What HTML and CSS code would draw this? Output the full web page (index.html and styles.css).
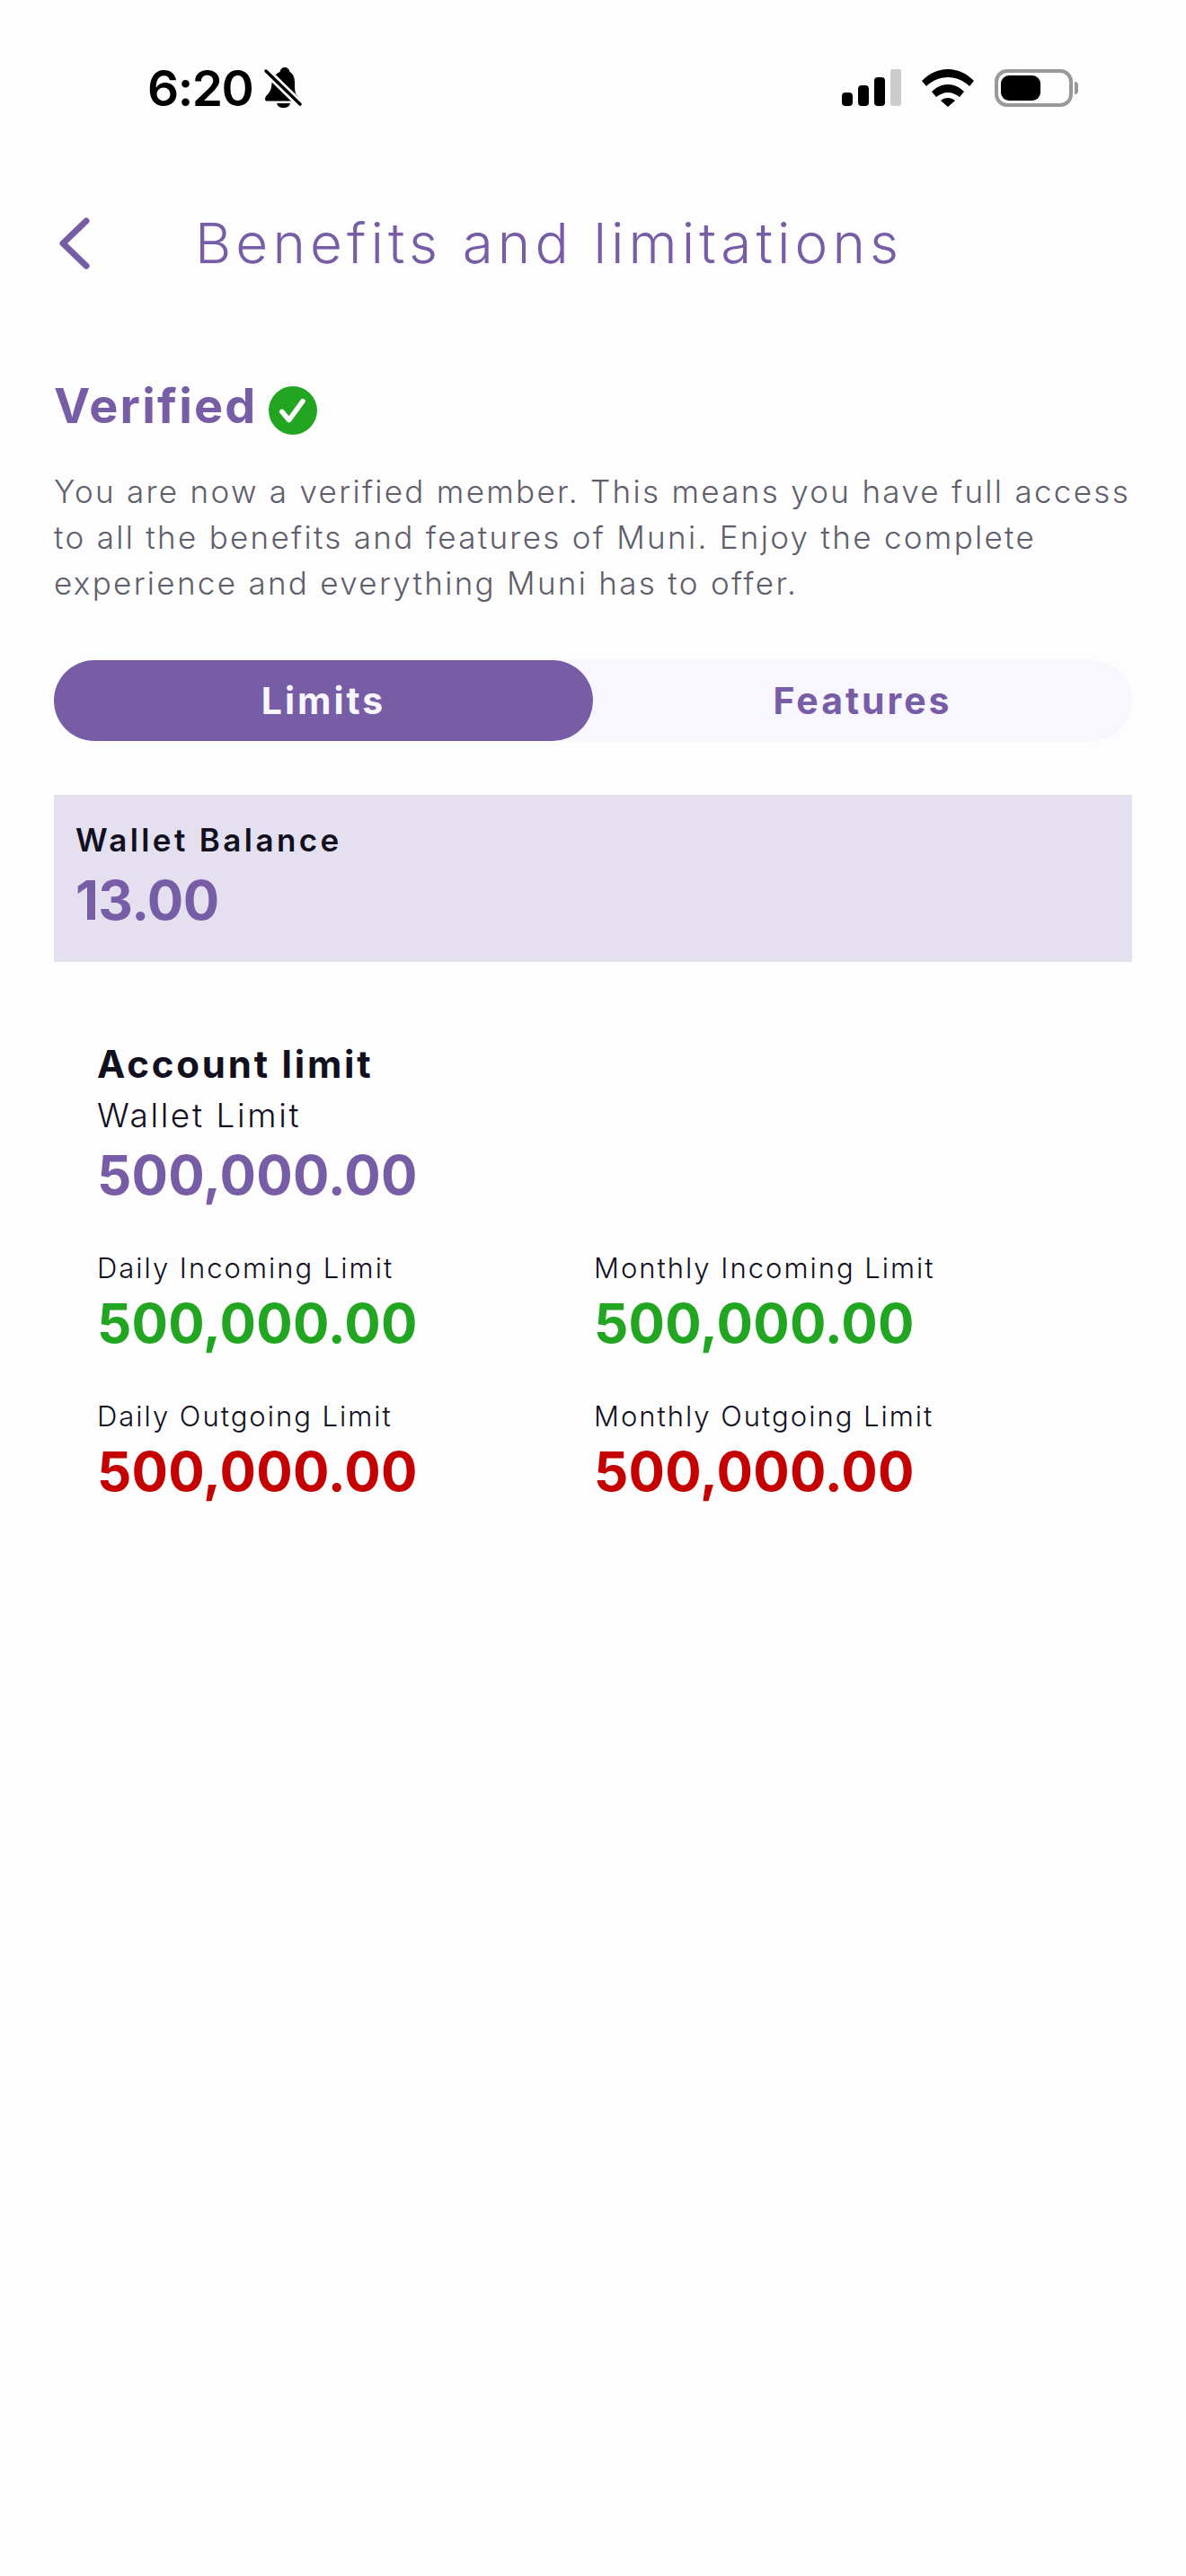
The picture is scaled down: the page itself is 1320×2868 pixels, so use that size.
FILE: index.html
```html
<!DOCTYPE html>
<html lang="en">
<head>
  <meta charset="UTF-8">
  <title>Benefits and limitations</title>
  <link rel="stylesheet" href="styles.css">
</head>
<body>
<div class="status">
  <div class="status-left">
    <span class="time">6:20</span>
    <svg class="bell" width="44" height="48" viewBox="0 0 44 48">
      <path d="M24 1C21 1 19 3 18.5 6 12 9 10 13 9.5 19 9 26 7 29 4 32 2.500 33.500 2 35 2 36.500 2 38 3 38.500 5 38.500H36C38 38.500 39 37.500 39 36 39 34 38 33 36 30 35 27 35 22 35 18 35 12 33 8 29.500 6 29 3 27 1 24 1z" fill="#000"/>
      <path d="M15 41H30C29 45 26 46 22.500 46S16 45 15 41z" fill="#000"/>
      <path d="M2 4L42 43" stroke="#fdfdfd" stroke-width="9" fill="none"/>
      <path d="M3 5L41 42" stroke="#000" stroke-width="3.500" stroke-linecap="round" fill="none"/>
    </svg>
  </div>
  <div class="status-right">
    <svg width="66" height="42" viewBox="0 0 66 42">
      <rect x="0" y="26" width="12" height="15" rx="4" fill="#000"/>
      <rect x="18" y="18" width="12" height="23" rx="4" fill="#000"/>
      <rect x="36" y="9" width="12" height="32" rx="4" fill="#000"/>
      <rect x="54" y="0" width="12" height="41" rx="3" fill="#ccc"/>
    </svg>
    <svg width="58" height="42" viewBox="0 0 58 42">
      <path d="M0 13C8 5 18 0 29 0s21 5 29 13l-5 6c-6-6-15-10-24-10S11 13 5 19z" fill="#000"/>
      <path d="M11 25c5-5 11-8 18-8s13 3 18 8l-5 6c-4-3-8-5-13-5s-9 2-13 5z" fill="#000"/>
      <path d="M21 35c2-2 5-3 8-3s6 1 8 3l-8 7z" fill="#000"/>
    </svg>
    <div class="battery">
      <div class="battery-body"><div class="battery-fill"></div></div>
      <div class="battery-tip"></div>
    </div>
  </div>
</div>

<div class="header">
  <svg class="back" width="36" height="58" viewBox="0 0 36 58">
    <path d="M31 4L5 29l26 25" stroke="#775da6" stroke-width="7" stroke-linecap="round" stroke-linejoin="round" fill="none"/>
  </svg>
  <h1>Benefits and limitations</h1>
</div>

<div class="content">
  <div class="verified">
    <h2>Verified</h2>
    <svg class="check" width="54" height="54" viewBox="0 0 54 54">
      <circle cx="27" cy="27" r="27" fill="#22a622"/>
      <path d="M14.700 28.300L22.700 37.700 38 16.700" stroke="#fff" stroke-width="5.500" stroke-linecap="round" stroke-linejoin="round" fill="none"/>
    </svg>
  </div>
  <p class="intro">You are now a verified member. This means you have full access<br>to all the benefits and features of Muni. Enjoy the complete<br>experience and everything Muni has to offer.</p>

  <div class="tabs">
    <div class="tab active">Limits</div>
    <div class="tab">Features</div>
  </div>

  <div class="balance">
    <div class="balance-label">Wallet Balance</div>
    <div class="balance-value">13.00</div>
  </div>

  <div class="limits">
    <h3>Account limit</h3>
    <div class="wallet-label">Wallet Limit</div>
    <div class="amount purple">500,000.00</div>
    <div class="limit-grid">
      <div>
        <div class="limit-label">Daily Incoming Limit</div>
        <div class="amount green">500,000.00</div>
      </div>
      <div>
        <div class="limit-label">Monthly Incoming Limit</div>
        <div class="amount green">500,000.00</div>
      </div>
      <div>
        <div class="limit-label">Daily Outgoing Limit</div>
        <div class="amount red">500,000.00</div>
      </div>
      <div>
        <div class="limit-label">Monthly Outgoing Limit</div>
        <div class="amount red">500,000.00</div>
      </div>
    </div>
  </div>
</div>
</body>
</html>
```

FILE: styles.css
```css
* { box-sizing: border-box; }
body { margin: 0; width: 1320px; height: 2868px; background: #fdfdfd; font-family: Inter, "Liberation Sans", sans-serif; color: #12101e; overflow: hidden; }
h1, h2, h3, p { margin: 0; }

.status { height: 196px; display: flex; justify-content: space-between; align-items: center; padding: 0 120px 0 164px; }
.status-left { display: flex; align-items: center; gap: 12px; }
.time { font-size: 55px; line-height: 60px; font-weight: 600; color: #000; letter-spacing: -1.5px; }
.status-right { display: flex; align-items: center; gap: 23px; }
.battery { display: flex; align-items: center; gap: 2px; }
.battery-body { width: 87px; height: 42px; border: 4px solid #999; border-radius: 14px; padding: 3px; }
.battery-fill { width: 44px; height: 100%; background: #000; border-radius: 9px; }
.battery-tip { width: 4px; height: 14px; background: #999; border-radius: 0 4px 4px 0; }

.header { height: 150px; display: flex; align-items: center; padding-left: 65px; }
.back { flex: none; }
h1 { margin-left: 116px; font-size: 62px; line-height: 80px; font-weight: 300; letter-spacing: 5.1px; color: #775da6; }

.content { padding: 0 60px; }
.verified { display: flex; align-items: flex-start; gap: 12px; margin-top: 73px; height: 66px; }
h2 { font-size: 54px; line-height: 66px; font-weight: 700; letter-spacing: 2.2px; color: #775da6; }
.check { margin-top: 11px; }
.intro { margin-top: 37px; font-size: 35px; line-height: 51px; font-weight: 300; letter-spacing: 2.3px; color: #5f5f6b; }

.tabs { display: flex; margin-top: 60px; height: 90px; background: #f8f6ff; border-radius: 45px; }
.tab { flex: 1; display: flex; align-items: center; justify-content: center; border-radius: 45px; font-size: 41px; font-weight: 700; letter-spacing: 3px; color: #775da6; }
.tab.active { background: #775da6; color: #f8f6ff; }

.balance { margin-top: 60px; height: 186px; padding: 28px 24px 0; background: #e4e0ef; }
.balance-label { font-size: 35px; line-height: 44px; font-weight: 600; letter-spacing: 3.4px; }
.balance-value { margin-top: 10px; font-size: 60px; line-height: 70px; font-weight: 700; letter-spacing: -0.6px; color: #775da6; }

.limits { margin-top: 89px; padding-left: 48px; }
h3 { font-size: 42px; line-height: 50px; font-weight: 700; letter-spacing: 2.8px; }
.wallet-label { margin-top: 10px; font-size: 37px; line-height: 44px; font-weight: 300; letter-spacing: 2.6px; }
.amount { font-size: 60px; line-height: 66px; font-weight: 700; letter-spacing: 0.2px; margin-top: 8px; }
.wallet-label + .amount { margin-top: 11px; }
.purple { color: #775da6; }
.green { color: #22a622; }
.red { color: #c40000; }
.limit-grid { display: grid; grid-template-columns: 553px 1fr; row-gap: 51px; margin-top: 51px; }
.limit-label { font-size: 31px; line-height: 40px; font-weight: 300; letter-spacing: 2px; }
```
